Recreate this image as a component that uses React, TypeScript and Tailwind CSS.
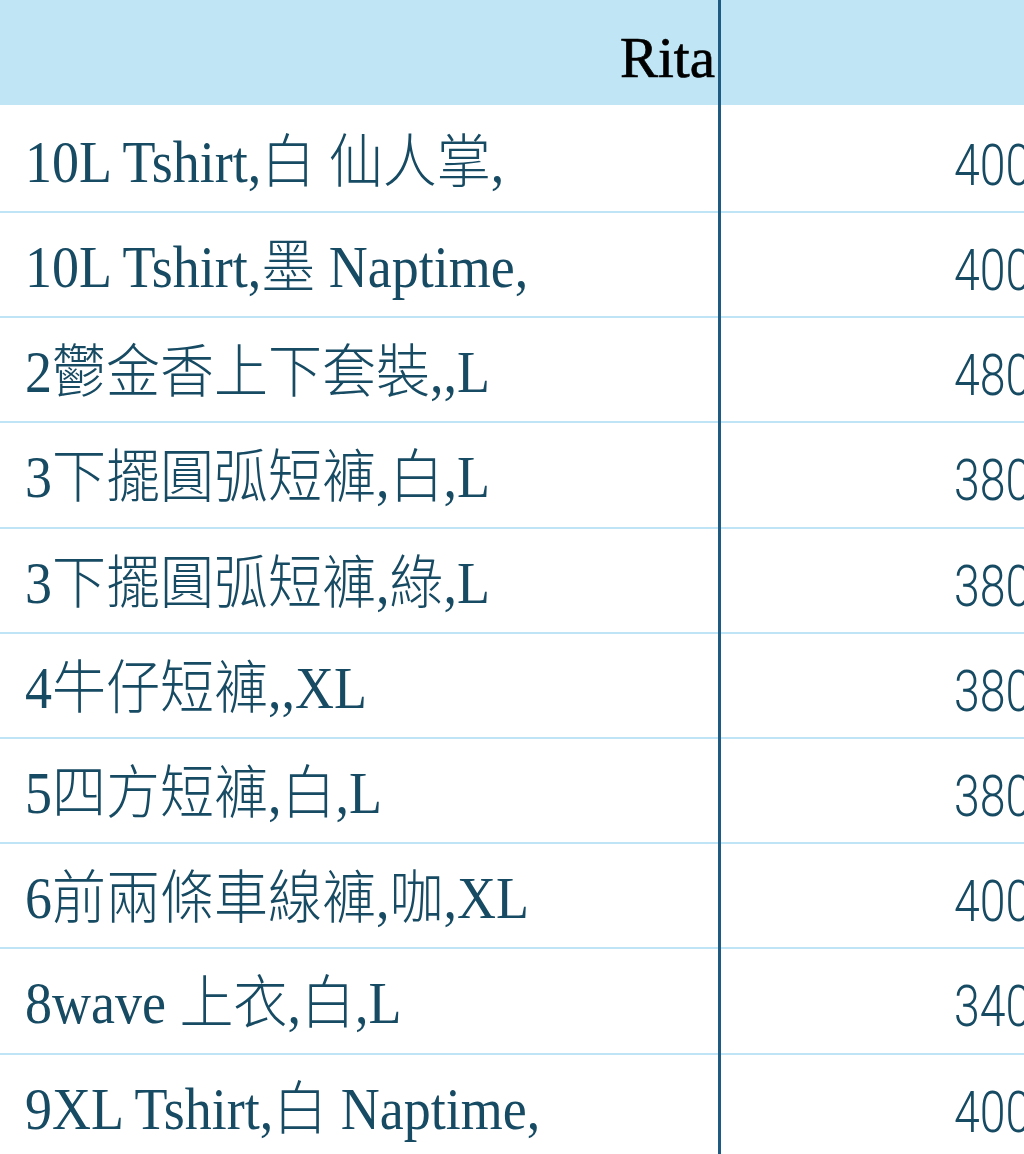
import React from "react";

const rows: { name: string; price: string }[] = [
  { name: "10L Tshirt,白 仙人掌,", price: "400" },
  { name: "10L Tshirt,墨 Naptime,", price: "400" },
  { name: "2鬱金香上下套裝,,L", price: "480" },
  { name: "3下擺圓弧短褲,白,L", price: "380" },
  { name: "3下擺圓弧短褲,綠,L", price: "380" },
  { name: "4牛仔短褲,,XL", price: "380" },
  { name: "5四方短褲,白,L", price: "380" },
  { name: "6前兩條車線褲,咖,XL", price: "400" },
  { name: "8wave 上衣,白,L", price: "340" },
  { name: "9XL Tshirt,白 Naptime,", price: "400" },
];

const serif = "font-['Liberation_Serif','Noto_Sans_CJK_TC',serif]";

export default function App() {
  return (
    <div className="w-[1024px] h-[1154px] overflow-hidden bg-white flex">
      <div className="w-[721px] shrink-0 border-r-[3px] border-[#1d5b82] flex flex-col">
        <div className="h-[105px] shrink-0 bg-[#c0e6f5] flex justify-end items-start pt-[29px] pr-[3px]">
          <span className={`${serif} text-[57px] leading-[57px] text-black [-webkit-text-stroke:0.7px_black]`}>Rita</span>
        </div>
        {rows.map((r, i) => (
          <div
            key={i}
            className={`shrink-0 box-border border-b-2 border-[#bfe4f5] flex items-start pl-[25px] ${i === 0 ? "h-[108px] pt-[31px]" : "h-[105.2px] pt-[28px]"}`}
          >
            <span className={`inline-block scale-y-[1.08] ${serif} font-light text-[54px] leading-[55px] text-[#174b63] whitespace-nowrap`}>{r.name}</span>
          </div>
        ))}
      </div>
      <div className="flex-1 flex flex-col overflow-hidden">
        <div className="h-[105px] shrink-0 bg-[#c0e6f5]" />
        {rows.map((r, i) => (
          <div
            key={i}
            className={`shrink-0 box-border border-b-2 border-[#bfe4f5] flex items-start pl-[233px] ${i === 0 ? "h-[108px] pt-[31px]" : "h-[105.2px] pt-[28px]"}`}
          >
            <span className="inline-block origin-left scale-x-[0.8] font-['Roboto','Liberation_Sans',sans-serif] font-light text-[58px] leading-[58px] text-[#174b63] whitespace-nowrap">
              {r.price}
            </span>
          </div>
        ))}
      </div>
    </div>
  );
}
